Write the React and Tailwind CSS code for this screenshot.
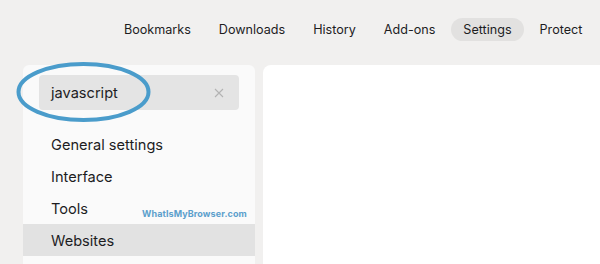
import React from "react";

const tabs = ["Bookmarks", "Downloads", "History", "Add-ons", "Settings", "Protect"];
const items = ["General settings", "Interface", "Tools", "Websites"];

export default function App() {
  return (
    <div
      className="relative w-[600px] h-[264px] overflow-hidden bg-[#f1f0ef] text-[#1d1d1f]"
      style={{ fontFamily: "Inter, 'Noto Sans', sans-serif" }}
    >
      <div className="flex h-[65px] items-start pt-[18px] pl-[112px] gap-1 whitespace-nowrap">
        {tabs.map((t) => (
          <div
            key={t}
            className={
              "h-[23px] px-3 pt-[2px] rounded-full flex items-center text-[12.6px] " +
              (t === "Settings" ? "bg-[#e2e1e0]" : "")
            }
          >
            {t}
          </div>
        ))}
      </div>
      <div className="flex h-[199px] pl-[23px] gap-2">
        <div className="relative w-[232px] bg-[#fafafa] rounded-t-md pt-[10px]">
          <div className="mx-4 h-[35px] rounded bg-[#e4e4e4] flex items-center pl-3 pr-[15px] justify-between">
            <span className="text-[14.6px] pt-[3px]">javascript</span>
            <svg width="10" height="10" viewBox="0 0 10 10">
              <path d="M1 1L9 9M9 1L1 9" stroke="#b3b3b3" strokeWidth="1.1" />
            </svg>
          </div>
          <div className="mt-[18px] flex flex-col">
            {items.map((it) => (
              <div
                key={it}
                className={
                  "h-8 flex items-center pl-7 pt-[3px] text-[14.6px] " +
                  (it === "Websites" ? "bg-[#e2e2e2]" : "")
                }
              >
                {it}
              </div>
            ))}
          </div>
          <div className="absolute left-[119px] top-[142px] text-[9px] font-bold text-[#5c9fcc] tracking-[0.1px]">
            WhatIsMyBrowser.com
          </div>
        </div>
        <div className="flex-1 bg-white rounded-tl-lg" />
      </div>
      <svg className="absolute left-0 top-0 pointer-events-none" width="600" height="264">
        <ellipse cx="83.5" cy="92" rx="65" ry="28" fill="none" stroke="#4a9ccb" strokeWidth="4" />
      </svg>
    </div>
  );
}
